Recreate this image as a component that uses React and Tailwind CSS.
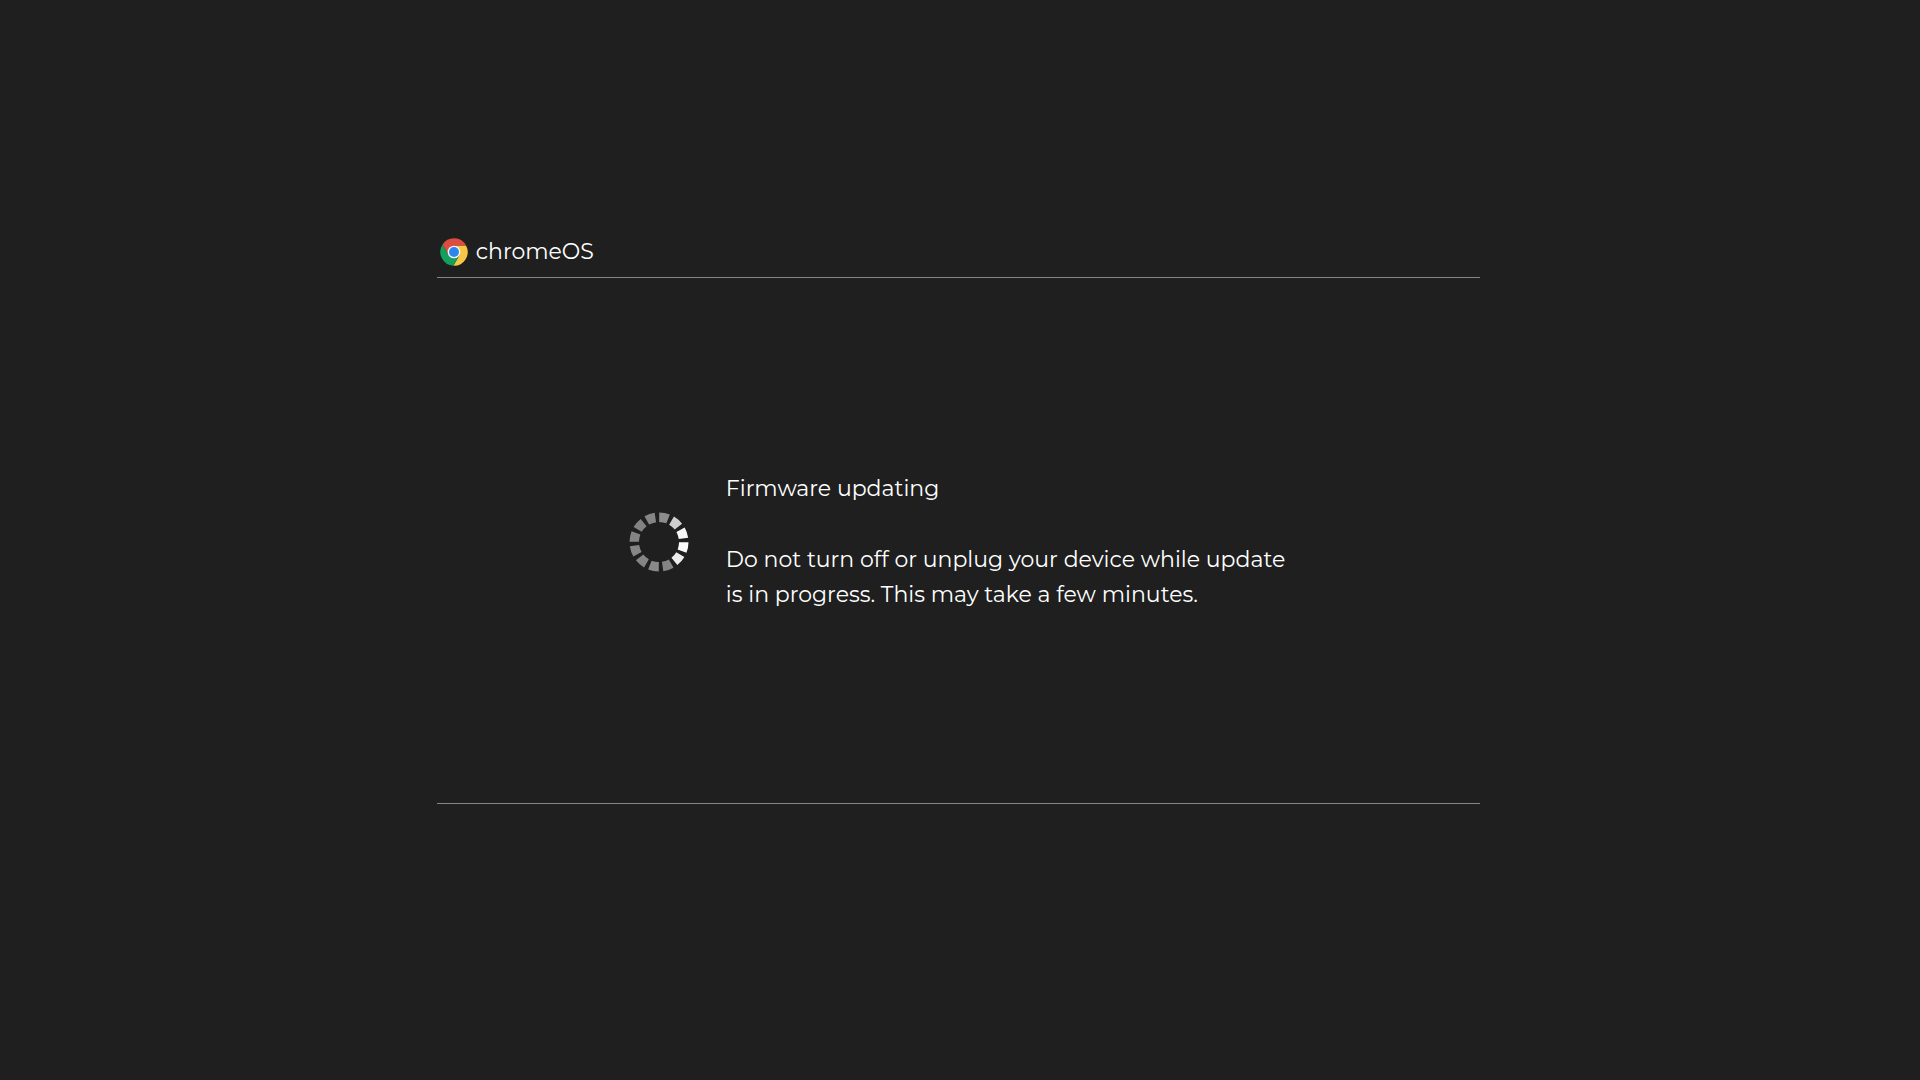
import React from "react";

const SEGMENTS = [
  "#8c8c8c", "#cfcfcf", "#f7f7f7", "#fbfbfb", "#ececec", "#858585",
  "#8a8a8a", "#858585", "#868686", "#858585", "#828282", "#858585",
];

function ChromeLogo() {
  return (
    <svg className="size-7 shrink-0" viewBox="-12.3 -12.3 24.6 24.6" aria-hidden="true">
      <path fill="#dc4c3f" d="M-10.1-6.49A12 12 0 0 1 10.67-5.5L0-5.5L-4.76 2.75Z" />
      <path fill="#f6c644" d="M10.67-5.5A12 12 0 0 1-.57 11.99L4.76 2.75L0-5.5Z" />
      <path fill="#12a05c" d="M-.57 11.99A12 12 0 0 1-10.1-6.49L-4.76 2.75L4.76 2.75Z" />
      <circle r="5.6" fill="#f4f6f8" />
      <circle r="4.4" fill="#2f86ea" />
    </svg>
  );
}

function Spinner() {
  return (
    <svg className="size-[60px] shrink-0" viewBox="-30 -30 60 60" role="img" aria-label="Updating">
      {SEGMENTS.map((color, i) => (
        <path
          key={i}
          fill={color}
          d="M-5.4-29Q0-30 5.4-29L3.7-19.7Q0-20.3-3.7-19.7Z"
          transform={`rotate(${11 + i * 30})`}
        />
      ))}
    </svg>
  );
}

export default function App() {
  return (
    <div className="grid min-h-screen grid-rows-[1fr_auto_1fr] bg-[#1f1f1f] pt-px pr-[22.9%] pl-[22.75%] font-['Montserrat','Inter',sans-serif] text-[22px] leading-[35px] text-white">
      <header className="flex items-center gap-2 self-end pb-2 pl-[3px]">
        <ChromeLogo />
        <h1>chromeOS</h1>
      </header>
      <main className="flex min-h-[527px] items-center gap-[37px] border-y border-[#858585] pt-0.5 pl-[18.4%]">
        <Spinner />
        <div className="shrink-0">
          <h2 className="mb-9">Firmware updating</h2>
          <p>
            Do not turn off or unplug your device while update
            <br />
            is in progress. This may take a few minutes.
          </p>
        </div>
      </main>
    </div>
  );
}
